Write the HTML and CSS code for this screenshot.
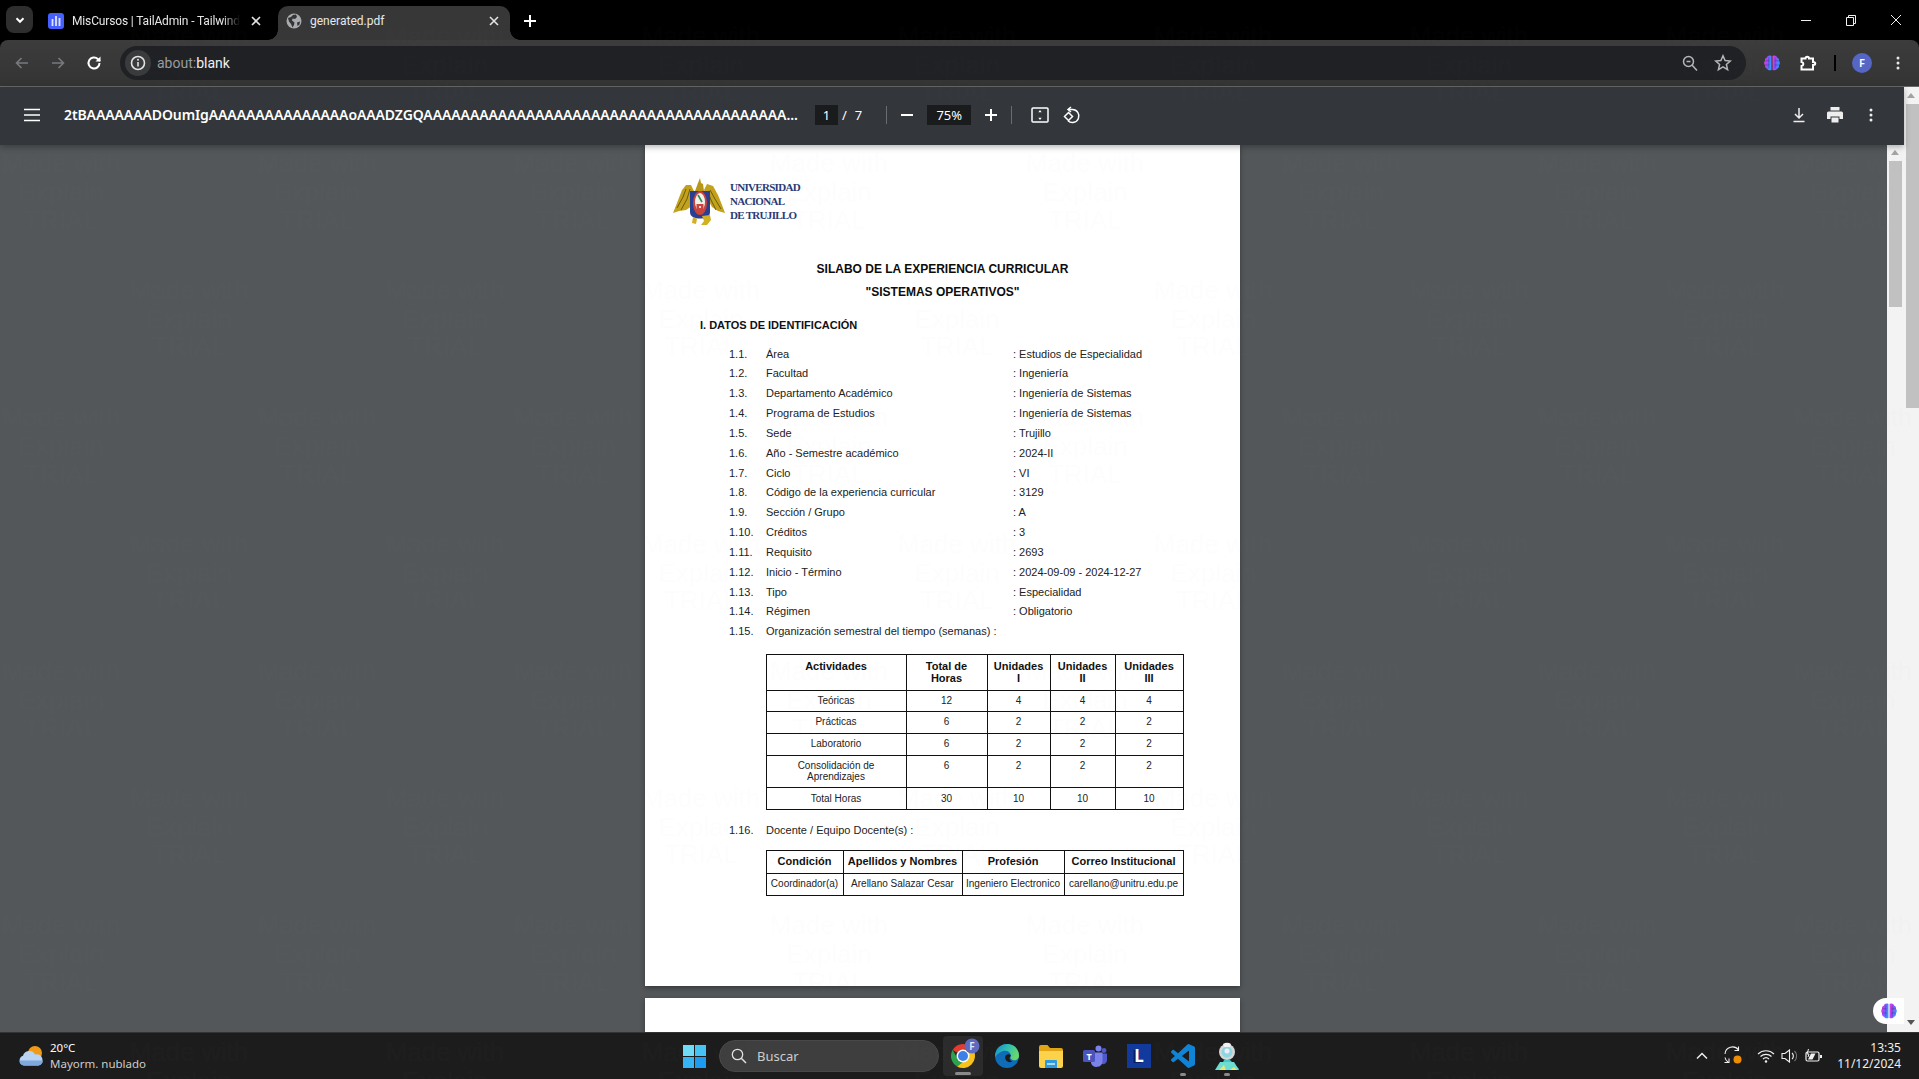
FILE: index.html
```html
<!DOCTYPE html>
<html lang="es">
<head>
<meta charset="utf-8">
<title>generated.pdf</title>
<link rel="stylesheet" href="styles.css">
</head>
<body>
<svg class="defs" width="0" height="0" aria-hidden="true">
  <defs>
    <linearGradient id="brainGrad" x1="0" y1="0" x2="1" y2="0.3">
      <stop offset="0" stop-color="#f04bc0"/><stop offset="0.3" stop-color="#c43df0"/><stop offset="0.6" stop-color="#7a5cff"/><stop offset="1" stop-color="#2f9bff"/>
    </linearGradient>
    <linearGradient id="edgeGrad" x1="0" y1="0" x2="1" y2="0.4">
      <stop offset="0" stop-color="#1788cf"/><stop offset="0.55" stop-color="#2fc0b0"/><stop offset="1" stop-color="#66d86a"/>
    </linearGradient>
    <symbol id="brain" viewBox="0 0 20 20">
      <path d="M9.4 2.2C7 1.2 5 2 4.4 3.8 2.6 4.3 1.8 6 2.3 7.6 1 9 1 11.300 2.300 12.500 1.900 14.300 3 16 4.600 16.300 5.300 18 7.500 18.700 9.400 17.800Z" fill="url(#brainGrad)"/>
      <path d="M10.600 2.200C13 1.200 15 2 15.600 3.800 17.400 4.300 18.200 6 17.700 7.600 19 9 19 11.300 17.700 12.500 18.100 14.300 17 16 15.400 16.300 14.700 18 12.500 18.700 10.600 17.800Z" fill="url(#brainGrad)"/>
      <path d="M2.500 7.500H7M2.500 12.200H7M13 7.500H17.500M13 12.200H17.500M6.500 4V16M13.500 4V16" stroke="#2b1f55" stroke-opacity=".45" stroke-width=".8" fill="none"/>
    </symbol>
    <symbol id="untLogo" viewBox="0 0 52 47">
      <path d="M0 35 4 25 9 12 13 7 18 7 21 13 19 28 13 32 6 33Z" fill="#c2a21c"/>
      <path d="M31 12 34 6 40 8 45 17 49 27 52 35 45 33 39 29 35 22Z" fill="#c2a21c"/>
      <path d="M22 13 25 5 27 0 28 5 30 6 31 13Z" fill="#b8961a"/>
      <path d="M4 30 10 19 13 11M8 32 14 21 17 11M48 31 42 21 37 12M43 32 38 22 35 14" stroke="#6d5a10" stroke-width="1" fill="none"/>
      <path d="M17 13H37V34C37 39 32 40.500 27 40.500 22 40.500 17 39 17 34Z" fill="#2a3f92"/>
      <ellipse cx="27" cy="25" rx="7" ry="12" fill="#c8443c"/>
      <ellipse cx="27" cy="24" rx="5" ry="9" fill="#f2f2ea"/>
      <path d="M23.500 26H30.500V31C30.500 33 28.500 34 27 34 25.500 34 23.500 33 23.500 31Z" fill="#c8443c"/>
      <path d="M25 17 29 24" stroke="#2f8a55" stroke-width="1.600"/>
      <path d="M26 29H28M27 28V30" stroke="#fff" stroke-width="1"/>
      <path d="M29 38 37 37 38 42 34 47 28 47 31 43Z" fill="#d2b024"/>
      <path d="M20 39 24 41 23 46 19 45Z" fill="#d2b024"/>
    </symbol>
    <pattern id="wm" x="0" y="0" width="256" height="254" patternUnits="userSpaceOnUse">
      <g class="wm-text">
        <text x="61" y="172">Made with</text><text x="61" y="201">Explain</text><text x="61" y="229">TRIAL</text>
        <text x="189" y="45">Made with</text><text x="189" y="74">Explain</text><text x="189" y="101">TRIAL</text>
      </g>
    </pattern>
  </defs>
</svg>

<div class="screen">
  <header class="tabstrip">
    <button class="tab-search" aria-label="Buscar pestañas">
      <svg width="12" height="12" viewBox="0 0 12 12"><path d="M2.500 4.300 6 7.800 9.500 4.300" class="st-white2"/></svg>
    </button>
    <div class="tab tab-inactive">
      <svg class="favicon" width="16" height="16" viewBox="0 0 16 16"><rect width="16" height="16" rx="3" fill="#465fff"/><path d="M4.500 6V13M8 3V13M11.500 5V13" stroke="#dfe4ff" stroke-width="1.800"/></svg>
      <span class="tab-title tab-fade">MisCursos | TailAdmin - Tailwind</span>
      <svg class="tab-close" width="12" height="12" viewBox="0 0 12 12"><path d="M2 2 10 10M10 2 2 10" class="st-light"/></svg>
    </div>
    <div class="tab tab-active">
      <svg class="favicon" width="16" height="16" viewBox="0 0 16 16"><circle cx="8" cy="8" r="7.500" fill="#a8abaf"/><path d="M2 5 5 4 7 2 10 1.500 11 4 9 6 6.500 5.500 6 7.500 8.500 9.500 8 12 6.500 14.500 5 11 3 8.500ZM11 9.500 14 8.500 13.500 11.500 11.500 13Z" fill="#353535"/></svg>
      <span class="tab-title">generated.pdf</span>
      <svg class="tab-close" width="12" height="12" viewBox="0 0 12 12"><path d="M2 2 10 10M10 2 2 10" class="st-light"/></svg>
    </div>
    <button class="new-tab" aria-label="Nueva pestaña">
      <svg width="14" height="14" viewBox="0 0 14 14"><path d="M7 1V13M1 7H13" class="st-white2"/></svg>
    </button>
    <div class="window-controls">
      <svg width="45" height="40" viewBox="0 0 45 40"><path d="M18 20.500H28" class="st-thin"/></svg>
      <svg width="45" height="40" viewBox="0 0 45 40"><path d="M18.500 17.500H25.500V25.500H18.500ZM20.500 17.500V15.500H27.500V23.500H25.500" class="st-thin"/></svg>
      <svg width="45" height="40" viewBox="0 0 45 40"><path d="M18 15 28 25M28 15 18 25" class="st-thin"/></svg>
    </div>
  </header>

  <nav class="toolbar">
    <span class="tb-btn"><svg width="16" height="16" viewBox="0 0 16 16"><path d="M14 8H2.500M7.500 3 2.500 8 7.500 13" class="st-dim"/></svg></span>
    <span class="tb-btn"><svg width="16" height="16" viewBox="0 0 16 16"><path d="M2 8H13.500M8.500 3 13.500 8 8.500 13" class="st-dim"/></svg></span>
    <span class="tb-btn"><svg width="16" height="16" viewBox="0 0 16 16"><path d="M13.500 8A5.500 5.500 0 1 1 11.800 4L14 6" class="st-white2"/><path d="M14.500 1.500V6.500H9.500Z" fill="#fff"/></svg></span>
    <div class="omnibox">
      <span class="info-chip"><svg width="16" height="16" viewBox="0 0 16 16"><circle cx="8" cy="8" r="6.500" class="st-light"/><path d="M8 7V11.500" class="st-light"/><circle cx="8" cy="4.800" r="1" fill="#e3e3e3"/></svg></span>
      <span class="url"><span class="url-scheme">about:</span>blank</span>
      <span class="omni-right">
        <svg width="18" height="18" viewBox="0 0 18 18"><circle cx="7.500" cy="7.500" r="5" class="st-mid"/><path d="M11 11 16 16.500M5.500 7.500H9.500" class="st-mid"/></svg>
        <svg width="18" height="18" viewBox="0 0 18 18"><path d="M9 1.800 11.100 6.600 16.300 7.100 12.400 10.500 13.600 15.600 9 12.900 4.400 15.600 5.600 10.500 1.700 7.100 6.900 6.600Z" class="st-mid"/></svg>
      </span>
    </div>
    <span class="tb-btn"><svg width="18" height="18"><use href="#brain"/></svg></span>
    <span class="tb-btn"><svg width="18" height="18" viewBox="0 0 18 18"><path d="M2.500 4.500H6.500C6.500 2 10 2 10 4.500H14V8C17 8 17 11 14 11V15.500H2.500V12C5 11.500 5 8.500 2.500 8Z" class="st-white2"/></svg></span>
    <span class="tb-sep"></span>
    <span class="tb-btn"><span class="avatar">F</span></span>
    <span class="tb-btn"><svg width="16" height="16" viewBox="0 0 16 16"><circle cx="8" cy="3" r="1.500" fill="#e8e8e8"/><circle cx="8" cy="8" r="1.500" fill="#e8e8e8"/><circle cx="8" cy="13" r="1.500" fill="#e8e8e8"/></svg></span>
  </nav>

  <div class="content">
    <main class="viewer">
      <div class="pdf-toolbar">
        <span class="pb-btn"><svg width="16" height="14" viewBox="0 0 16 14"><path d="M0 1.500H16M0 7H16M0 12.500H16" stroke="#fff" stroke-width="1.700" fill="none"/></svg></span>
        <span class="pdf-title">2tBAAAAAAADOumIgAAAAAAAAAAAAAAAoAAADZGQAAAAAAAAAAAAAAAAAAAAAAAAAAAAAAAAAAAAAAA...</span>
        <span class="page-box">1</span>
        <span class="page-slash">/</span>
        <span class="page-total">7</span>
        <span class="pb-sep pb-sep-a"></span>
        <span class="pb-btn pb-minus"><svg width="14" height="14" viewBox="0 0 14 14"><path d="M1 7H13" class="st-white2"/></svg></span>
        <span class="zoom-box">75%</span>
        <span class="pb-btn pb-plus"><svg width="14" height="14" viewBox="0 0 14 14"><path d="M1 7H13M7 1V13" class="st-white2"/></svg></span>
        <span class="pb-sep pb-sep-b"></span>
        <span class="pb-btn pb-fit"><svg width="18" height="16" viewBox="0 0 18 16"><rect x="1" y="1" width="16" height="14" rx="1" class="st-white15"/><path d="M9 3 7.300 5.200H10.700ZM9 13 7.300 10.800H10.700Z" fill="#fff"/></svg></span>
        <span class="pb-btn pb-rot"><svg width="18" height="18" viewBox="0 0 18 18"><path d="M5.500 3.500H9.500A6.500 6.500 0 1 1 5 14.800" class="st-white15"/><path d="M8 1 5 3.500 8 6" class="st-white15"/><path d="M5.500 6.500 9.500 10.500 5.500 14.500 1.500 10.500Z" class="st-white15"/></svg></span>
        <span class="pb-right">
          <span class="pb-btn"><svg width="16" height="16" viewBox="0 0 16 16"><path d="M8 1V10.500M4 7 8 11 12 7M2.500 14.500H13.500" class="st-light15"/></svg></span>
          <span class="pb-btn"><svg width="18" height="18" viewBox="0 0 18 18"><path d="M4.500 1H13.500V4.500H4.500Z" fill="#eee"/><path d="M2.500 5.500H15.500A1.500 1.500 0 0 1 17 7V13H13.500V10.500H4.500V13H1V7A1.500 1.500 0 0 1 2.500 5.500Z" fill="#eee"/><path d="M5.500 11.500H12.500V16.500H5.500Z" fill="#eee"/></svg></span>
          <span class="pb-btn"><svg width="16" height="16" viewBox="0 0 16 16"><circle cx="8" cy="3" r="1.500" fill="#eee"/><circle cx="8" cy="8" r="1.500" fill="#eee"/><circle cx="8" cy="13" r="1.500" fill="#eee"/></svg></span>
        </span>
      </div>
      <div class="pdf-area">
        <div class="pages">
          <article class="page">
            <div class="letterhead">
              <svg class="logo" width="52" height="47"><use href="#untLogo"/></svg>
              <div class="uni-name">UNIVERSIDAD<br>NACIONAL<br>DE TRUJILLO</div>
            </div>
            <h1 class="doc-title">SILABO DE LA EXPERIENCIA CURRICULAR<br>"SISTEMAS OPERATIVOS"</h1>
            <h2 class="doc-section">I. DATOS DE IDENTIFICACIÓN</h2>
            <div class="data-list">
              <div class="data-row"><span>1.1.</span><span>Área</span><span>: Estudios de Especialidad</span></div>
              <div class="data-row"><span>1.2.</span><span>Facultad</span><span>: Ingeniería</span></div>
              <div class="data-row"><span>1.3.</span><span>Departamento Académico</span><span>: Ingeniería de Sistemas</span></div>
              <div class="data-row"><span>1.4.</span><span>Programa de Estudios</span><span>: Ingeniería de Sistemas</span></div>
              <div class="data-row"><span>1.5.</span><span>Sede</span><span>: Trujillo</span></div>
              <div class="data-row"><span>1.6.</span><span>Año - Semestre académico</span><span>: 2024-II</span></div>
              <div class="data-row"><span>1.7.</span><span>Ciclo</span><span>: VI</span></div>
              <div class="data-row"><span>1.8.</span><span>Código de la experiencia curricular</span><span>: 3129</span></div>
              <div class="data-row"><span>1.9.</span><span>Sección / Grupo</span><span>: A</span></div>
              <div class="data-row"><span>1.10.</span><span>Créditos</span><span>: 3</span></div>
              <div class="data-row"><span>1.11.</span><span>Requisito</span><span>: 2693</span></div>
              <div class="data-row"><span>1.12.</span><span>Inicio - Término</span><span>: 2024-09-09 - 2024-12-27</span></div>
              <div class="data-row"><span>1.13.</span><span>Tipo</span><span>: Especialidad</span></div>
              <div class="data-row"><span>1.14.</span><span>Régimen</span><span>: Obligatorio</span></div>
              <div class="data-row"><span>1.15.</span><span class="span-2">Organización semestral del tiempo (semanas) :</span></div>
            </div>
            <table class="doc-table hours">
              <colgroup><col class="h1"><col class="h2"><col class="h3"><col class="h4"><col class="h5"></colgroup>
              <tr class="r-head"><th>Actividades</th><th>Total de<br>Horas</th><th>Unidades<br>I</th><th>Unidades<br>II</th><th>Unidades<br>III</th></tr>
              <tr class="r-a"><td>Teóricas</td><td>12</td><td>4</td><td>4</td><td>4</td></tr>
              <tr class="r-b"><td>Prácticas</td><td>6</td><td>2</td><td>2</td><td>2</td></tr>
              <tr class="r-c"><td>Laboratorio</td><td>6</td><td>2</td><td>2</td><td>2</td></tr>
              <tr class="r-d"><td class="tight">Consolidación de<br>Aprendizajes</td><td>6</td><td>2</td><td>2</td><td>2</td></tr>
              <tr class="r-b r-total"><td>Total Horas</td><td>30</td><td>10</td><td>10</td><td>10</td></tr>
            </table>
            <div class="data-row row-teachers"><span>1.16.</span><span class="span-2">Docente / Equipo Docente(s) :</span></div>
            <table class="doc-table staff">
              <colgroup><col class="s1"><col class="s2"><col class="s3"><col class="s4"></colgroup>
              <tr class="r-shead"><th>Condición</th><th>Apellidos y Nombres</th><th>Profesión</th><th>Correo Institucional</th></tr>
              <tr class="r-sbody"><td>Coordinador(a)</td><td>Arellano Salazar Cesar</td><td>Ingeniero Electronico</td><td>carellano@unitru.edu.pe</td></tr>
            </table>
          </article>
          <article class="page">
            <div class="letterhead"><svg class="logo" width="52" height="47"><use href="#untLogo"/></svg></div>
          </article>
        </div>
        <div class="inner-scroll">
          <span class="arrow-up"></span>
          <span class="thumb-inner"></span>
        </div>
      </div>
    </main>
    <aside class="outer-scroll">
      <span class="arrow-up"></span>
      <span class="thumb-outer"></span>
      <span class="arrow-down"></span>
    </aside>
    <div class="float-pill"><svg width="18" height="18"><use href="#brain"/></svg></div>
  </div>

  <footer class="taskbar">
    <div class="tb-left">
      <svg width="26" height="22" viewBox="0 0 26 22">
        <circle cx="17" cy="8" r="7" fill="#f09a1a"/>
        <path d="M6 20.500A5 5 0 0 1 5 10.800 6.500 6.500 0 0 1 17 9.500 5.500 5.500 0 0 1 20.500 20.500Z" fill="#b9d3f2"/>
        <path d="M6 20.500A5 5 0 0 1 1.500 15.500H25A5.500 5.500 0 0 1 20.500 20.500Z" fill="#7fa9de"/>
      </svg>
      <div class="weather"><div class="w-temp">20°C</div><div class="w-desc">Mayorm. nublado</div></div>
    </div>
    <div class="tb-center">
      <svg class="win" width="23" height="23" viewBox="0 0 23 23">
        <rect width="11" height="11" fill="#6fdcf7"/><rect x="12" width="11" height="11" fill="#45c4f5"/><rect y="12" width="11" height="11" fill="#35b5f5"/><rect x="12" y="12" width="11" height="11" fill="#1c9bf0"/>
      </svg>
      <div class="search-pill">
        <svg width="16" height="16" viewBox="0 0 16 16"><circle cx="6.500" cy="6.500" r="5.200" fill="none" stroke="#e0e0e0" stroke-width="1.300"/><path d="M10.300 10.300 15 15" stroke="#e0e0e0" stroke-width="1.500"/></svg>
        <span>Buscar</span>
      </div>
      <div class="app app-active">
        <svg width="40" height="40" viewBox="0 0 40 40">
          <path d="M20 8A12 12 0 0 1 30.400 14H20A6 6 0 0 0 14.800 17L9.600 14A12 12 0 0 1 20 8Z" fill="#e33b2e"/>
          <path d="M9.600 14 14.800 23A6 6 0 0 0 20 26L14 30.400A12 12 0 0 1 9.600 14Z" fill="#2ba24c"/>
          <path d="M30.400 14A12 12 0 0 1 14 30.400L20 26A6 6 0 0 0 25.200 17L20 14Z" fill="#f7c21a"/>
          <circle cx="20" cy="20" r="6.500" fill="#fff"/><circle cx="20" cy="20" r="5" fill="#3f7fe8"/>
          <circle cx="29" cy="10" r="7.500" fill="#5c6bc0"/>
          <text x="29" y="13.500" class="badge-f">F</text>
        </svg>
        <span class="app-bar"></span>
      </div>
      <div class="app">
        <svg width="24" height="24" viewBox="0 0 24 24">
          <circle cx="12" cy="12" r="12" fill="#0f6cb8"/>
          <path d="M1 7.500C3 2.800 7 0 12 0 19 0 24 5 24 12 24 15 21 17 18 16 15 15 15 13 16 11 15 7 11 6 8 7 5 8 2 10 0 13 0 11 .3 9 1 7.500Z" fill="url(#edgeGrad)"/>
          <path d="M10 13C11 9.500 15 9.500 16 12 14 13 14 16 17 17.500 14 19.500 10 17 10 13Z" fill="#1c1c1c"/>
        </svg>
      </div>
      <div class="app">
        <svg width="24" height="23" viewBox="0 0 24 23">
          <path d="M0 2A2 2 0 0 1 2 0H8.500L11 3H22A2 2 0 0 1 24 5V8H0Z" fill="#e0a416"/>
          <path d="M0 6H24V21A2 2 0 0 1 22 23H2A2 2 0 0 1 0 21Z" fill="#fbd24a"/>
          <path d="M7 15H17A1 1 0 0 1 18 16V23H6V16A1 1 0 0 1 7 15Z" fill="#2d9ae0"/>
          <path d="M8 19H16" stroke="#d5ecfa" stroke-width="1.500"/>
        </svg>
      </div>
      <div class="app">
        <svg width="24" height="24" viewBox="0 0 24 24">
          <circle cx="15.500" cy="4.500" r="3" fill="#7b83eb"/><circle cx="21" cy="6.500" r="2.400" fill="#5059c9"/>
          <path d="M18 9.500H24V16A4 4 0 0 1 19 20Z" fill="#5059c9"/>
          <path d="M9 8.500H19.500V18A6 6 0 0 1 8 19Z" fill="#7b83eb"/>
          <rect x="0" y="6" width="12" height="12" rx="1.500" fill="#4b53bc"/>
          <text x="6" y="15.500" class="teams-t">T</text>
        </svg>
      </div>
      <div class="app">
        <span class="l-tile">L</span>
      </div>
      <div class="app">
        <svg width="24" height="24" viewBox="0 0 24 24">
          <path d="M23.150 2.587 18.210.210a1.494 1.494 0 0 0-1.705.29l-9.460 8.630-4.120-3.128a.999.999 0 0 0-1.276.057L.327 7.261A1 1 0 0 0 .326 8.740L3.899 12 .326 15.260a1 1 0 0 0 .001 1.479L1.650 17.940a.999.999 0 0 0 1.276.057l4.120-3.128 9.460 8.630a1.492 1.492 0 0 0 1.704.29l4.942-2.377A1.500 1.500 0 0 0 24 20.060V3.939a1.500 1.500 0 0 0-.850-1.352zm-5.146 14.861L10.826 12l7.178-5.448v10.896z" fill="#0f84d6"/>
        </svg>
        <span class="app-dot"></span>
      </div>
      <div class="app">
        <svg width="24" height="30" viewBox="0 0 24 30">
          <path d="M5 28 9 19H15L24 28Z" fill="#42c7c9"/><path d="M0 29 5 21H19L24 29Z" fill="#6ddcd2"/>
          <circle cx="12" cy="11" r="8" fill="#d7d7d7"/><circle cx="12" cy="11" r="5.500" fill="#8fd7e0"/><circle cx="12" cy="10" r="2.500" fill="#eef"/>
          <path d="M8 3A8 8 0 0 1 16 3L15 6H9Z" fill="#f2f2f2"/><path d="M4 29 9 24 11 29ZM15 29H22L19 26Z" fill="#e8e86a"/>
        </svg>
        <span class="app-dot"></span>
      </div>
    </div>
    <div class="tray">
      <svg class="t-chev" width="14" height="10" viewBox="0 0 14 10"><path d="M2 7.500 7 2.500 12 7.500" class="st-light15"/></svg>
      <svg class="t-sync" width="22" height="20" viewBox="0 0 22 20"><path d="M2 8A7.500 7.500 0 0 1 15.500 4M15.500 0.500V4.500H11.500M2 11.500A7 7 0 0 0 5 16M1.500 16.500H6V12.500" fill="none" stroke="#f0f0f0" stroke-width="1.100"/><circle cx="14.500" cy="13.500" r="4" fill="#f08c00"/></svg>
      <svg class="t-wifi" width="18" height="14" viewBox="0 0 18 14"><path d="M1 5A11.500 11.500 0 0 1 17 5M3.500 7.500A8 8 0 0 1 14.500 7.500M6 10A4.500 4.500 0 0 1 12 10" fill="none" stroke="#f0f0f0" stroke-width="1.200"/><circle cx="9" cy="12.500" r="1.200" fill="#f0f0f0"/></svg>
      <svg class="t-vol" width="18" height="14" viewBox="0 0 18 14"><path d="M1 4.500H4L8.500 1V13L4 9.500H1Z" fill="none" stroke="#f0f0f0" stroke-width="1.100"/><path d="M11 4A4 4 0 0 1 11 10" fill="none" stroke="#f0f0f0" stroke-width="1.100"/><path d="M13.500 2A7 7 0 0 1 13.500 12" fill="none" stroke="#777" stroke-width="1.100"/></svg>
      <svg class="t-bat" width="18" height="14" viewBox="0 0 18 14"><rect x="1" y="3" width="13" height="9" rx="1.500" fill="none" stroke="#f0f0f0" stroke-width="1.200"/><path d="M3 10.500 6 4.500H10.500L7.500 10.500Z" fill="#f0f0f0"/><path d="M3.500 0 2 5H4L3 8" fill="none" stroke="#f0f0f0"/><rect x="15" y="6" width="2" height="3" fill="#f0f0f0"/></svg>
      <div class="clock"><div>13:35</div><div>11/12/2024</div></div>
    </div>
  </footer>

  <svg class="watermark" width="1919" height="1079" aria-hidden="true"><rect width="1919" height="1079" fill="url(#wm)"/></svg>
</div>
</body>
</html>
```
FILE: styles.css
```css
* { box-sizing: border-box; }
html, body { margin: 0; height: 100%; overflow: hidden; background: #000; }
body { font-family: "Noto Sans", "Liberation Sans", sans-serif; color: #fff; }
button { border: 0; padding: 0; background: none; font: inherit; color: inherit; }
.defs { position: absolute; }

.st-white2 { fill: none; stroke: #fff; stroke-width: 2; }
.st-white15 { fill: none; stroke: #fff; stroke-width: 1.5; }
.st-light { fill: none; stroke: #e3e3e3; stroke-width: 1.6; }
.st-light15 { fill: none; stroke: #eee; stroke-width: 1.5; }
.st-dim { fill: none; stroke: #777a7d; stroke-width: 1.6; }
.st-mid { fill: none; stroke: #b4b6b8; stroke-width: 1.5; }
.st-thin { fill: none; stroke: #f0f0f0; stroke-width: 1; }

.screen { position: relative; width: 1919px; height: 1079px; display: flex; flex-direction: column; overflow: hidden; }

/* Tab strip */
.tabstrip { flex: 0 0 40px; display: flex; align-items: flex-start; background: #000; padding-left: 6px; }
.tab-search { width: 27px; height: 27px; margin-top: 6px; border-radius: 8px; background: #2e2e2e; display: flex; align-items: center; justify-content: center; }
.tab { height: 34px; margin-top: 6px; padding-bottom: 5px; display: flex; align-items: center; font-family: Roboto, "Noto Sans", sans-serif; font-size: 12px; position: relative; }
.tab-inactive { width: 232px; margin-left: 6px; padding-left: 9px; color: #e6e6e6; }
.tab-active { width: 232px; margin-left: 7px; padding-left: 8px; background: #373737; border-radius: 10px 10px 0 0; color: #e8e8e8; }
.tab-active::before, .tab-active::after { content: ""; position: absolute; bottom: 0; width: 10px; height: 10px; }
.tab-active::before { left: -10px; background: radial-gradient(circle at 0 0, transparent 9.5px, #373737 10px); }
.tab-active::after { right: -10px; background: radial-gradient(circle at 100% 0, transparent 9.5px, #373737 10px); }
.favicon { flex: none; }
.tab-title { margin-left: 8px; white-space: nowrap; flex: none; }
.tab-fade { letter-spacing: -.15px; mask-image: linear-gradient(to right, #000 90%, transparent 100%); }
.tab-close { flex: none; margin: 0 10px 0 auto; }
.tab-inactive .tab-close { margin-right: 9px; }
.new-tab { width: 40px; height: 29px; margin-top: 6px; display: flex; align-items: center; justify-content: center; }
.window-controls { margin-left: auto; margin-right: 1px; display: flex; }
.window-controls svg { display: block; }

/* Browser toolbar */
.toolbar { flex: 0 0 47px; display: flex; align-items: center; padding: 0 3px 1px 4px; background: linear-gradient(#3c3c3c, #343434); border-bottom: 1px solid #6a6a6a; border-radius: 8px 8px 0 0; }
.tb-btn { flex: none; width: 36px; height: 36px; display: flex; align-items: center; justify-content: center; }
.omnibox { flex: 1; height: 34px; margin: 0 8px; background: #202124; border-radius: 17px; display: flex; align-items: center; padding: 0 14px 0 5px; }
.info-chip { width: 26px; height: 26px; border-radius: 50%; background: #3a3b3d; display: flex; align-items: center; justify-content: center; }
.url { margin-left: 6px; font-family: Roboto, "Noto Sans", sans-serif; font-size: 14px; color: #f0f0f0; }
.url-scheme { color: #9a9c9f; }
.omni-right { margin-left: auto; display: flex; gap: 15px; align-items: center; }
.tb-sep { flex: none; width: 2px; height: 16px; margin: 0 8px; background: #000; }
.avatar { width: 20px; height: 20px; border-radius: 50%; background: #5566c4; font-size: 11px; font-weight: 600; display: flex; align-items: center; justify-content: center; }

/* Layout of the viewer */
.content { flex: 1; min-height: 0; display: flex; position: relative; }
.viewer { flex: 1; min-width: 0; display: flex; flex-direction: column; }
.pdf-toolbar { flex: 0 0 58px; display: flex; align-items: center; padding: 0 0 3px 14px; background: #33363a; box-shadow: 0 2px 6px rgba(0,0,0,.3); position: relative; z-index: 2; }
.pb-btn { flex: none; width: 36px; height: 36px; display: flex; align-items: center; justify-content: center; }
.pdf-title { flex: none; width: 730px; margin-left: 14px; font-size: 14px; font-weight: 600; color: #fff; white-space: nowrap; letter-spacing: -.1px; }
.page-box, .zoom-box { flex: none; height: 20px; background: #191b1d; font-size: 13px; display: flex; align-items: center; justify-content: center; }
.page-box { width: 23px; margin-left: 21px; }
.page-slash { margin-left: 4px; font-size: 13px; }
.page-total { margin-left: 8px; font-size: 13px; }
.pb-sep { flex: none; width: 1px; height: 18px; background: #6a6d70; }
.pb-sep-a { margin-left: 24px; }
.pb-minus { margin-left: 2px; }
.zoom-box { width: 44px; margin-left: 2px; }
.pb-plus { margin-left: 2px; }
.pb-sep-b { margin-left: 2px; }
.pb-fit { margin-left: 10px; }
.pb-rot { margin-left: -4px; }
.pb-right { margin-left: auto; margin-right: 15px; display: flex; }

.pdf-area { flex: 1; min-height: 0; display: flex; background: #53575a; }
.pages { flex: 1; min-width: 0; overflow: hidden; display: flex; flex-direction: column; align-items: center; gap: 12px; padding-right: 2px; margin-top: -1px; }
.page { flex: none; width: 595px; height: 842px; background: #fff; color: #111; font-family: "Liberation Sans", Arial, sans-serif; padding-top: 34px; box-shadow: 0 2px 5px rgba(0,0,0,.35); }

.inner-scroll { flex: 0 0 17px; position: relative; background: #f3f3f3; }
.inner-scroll .arrow-up { top: 5px; left: 4px; }
.thumb-inner { position: absolute; left: 2px; top: 16px; width: 13px; height: 146px; background: #c1c1c1; }
.outer-scroll { flex: 0 0 15px; position: relative; background: #f3f3f3; }
.outer-scroll .arrow-up { top: 6px; left: 3px; }
.thumb-outer { position: absolute; left: 2px; right: 0; top: 17px; height: 304px; background: #c1c1c1; }
.arrow-up, .arrow-down { position: absolute; width: 0; height: 0; border-left: 4px solid transparent; border-right: 4px solid transparent; }
.arrow-up { border-bottom: 5px solid #a3a3a3; }
.arrow-down { border-top: 5px solid #555; bottom: 7px; left: 3px; }
.float-pill { position: absolute; left: 1873px; top: 911px; width: 31px; height: 26px; border-radius: 13px 0 0 13px; background: #fff; display: flex; align-items: center; justify-content: center; }

/* Document */
.letterhead { display: flex; padding-left: 28px; height: 47px; }
.logo { flex: none; display: block; }
.uni-name { margin: 2px 0 0 5px; font-family: "Liberation Serif", serif; font-weight: 700; font-size: 11px; letter-spacing: -.7px; line-height: 14px; color: #2b3a75; white-space: nowrap; }
.doc-title { margin: 33px 0 0; font-size: 12px; font-weight: 700; line-height: 22.5px; text-align: center; color: #0c0c0c; }
.doc-section { margin: 15px 0 0 55px; font-size: 11px; font-weight: 700; line-height: 14px; color: #111; }
.data-list { margin-top: 11.5px; padding-left: 84px; }
.data-row { display: grid; grid-template-columns: 37px 247px 1fr; height: 19.85px; line-height: 20px; font-size: 11px; color: #222; }
.span-2 { grid-column: span 2; }
.row-teachers { margin: 10px 0 0 84px; }
.doc-table { border-collapse: collapse; table-layout: fixed; width: 417px; margin-left: 120.5px; color: #222; }
.hours { margin-top: 12.5px; }
.staff { margin-top: 10px; }
.doc-table th, .doc-table td { border: 1px solid #111; padding: 4px 1px 0; vertical-align: top; text-align: center; font-size: 10px; line-height: 12px; }
.doc-table th { font-size: 11px; font-weight: 700; color: #111; padding-top: 5px; }
.doc-table td.tight { line-height: 11px; }
.h1 { width: 140px; } .h2 { width: 81px; } .h3 { width: 63px; } .h4 { width: 65px; } .h5 { width: 68px; }
.s1 { width: 77px; } .s2 { width: 119px; } .s3 { width: 102px; } .s4 { width: 119px; }
.r-head { height: 36px; } .r-a { height: 21px; } .r-b { height: 22px; } .r-c { height: 22px; } .r-d { height: 32px; }
.r-shead { height: 23px; } .r-sbody { height: 22px; }
.doc-table .r-total td { padding-top: 5px; }
.doc-table .r-shead th { padding-top: 4px; }
.doc-table .r-sbody td { padding: 4px 0 0; }

/* Taskbar */
.taskbar { flex: 0 0 47px; display: flex; background: #1c1c1c; border-top: 1px solid #333; position: relative; z-index: 3; }
.tb-left { flex: 0 0 683px; display: flex; align-items: center; padding-left: 18px; gap: 6px; }
.weather { font-size: 11.5px; line-height: 16px; }
.w-temp { color: #fff; }
.w-desc { color: #ccc; }
.tb-center { display: flex; align-items: center; }
.win { flex: none; }
.search-pill { width: 220px; height: 32px; margin-left: 13px; border-radius: 16px; background: #3e3e3e; border: 1px solid #484848; display: flex; align-items: center; padding-left: 11px; gap: 10px; font-size: 13px; color: #ccc; }
.app { flex: none; width: 44px; height: 40px; position: relative; display: flex; align-items: center; justify-content: center; }
.app-active { width: 40px; margin: 0 2px 0 4px; background: #2b2b2b; border-radius: 4px; }
.app-bar { position: absolute; bottom: 1px; left: 12px; width: 16px; height: 3px; border-radius: 2px; background: #8a8a8a; }
.app-dot { position: absolute; bottom: 0; left: 19px; width: 6px; height: 3px; border-radius: 2px; background: #8a8a8a; }
.badge-f { fill: #e8eaff; font: 600 10px "Noto Sans", sans-serif; text-anchor: middle; }
.teams-t { fill: #fff; font: 700 9px "Noto Sans", sans-serif; text-anchor: middle; }
.l-tile { width: 24px; height: 24px; background: #123a9c; color: #fff; font: 700 17px/24px "Noto Sans", sans-serif; text-align: center; text-shadow: -2px 1px 0 #0a1f5c; }
.tray { flex: 1; display: flex; align-items: center; position: relative; }
.t-chev { margin-left: 446px; }
.t-sync { margin-left: 14px; }
.t-wifi { margin-left: 12px; }
.t-vol { margin-left: 6px; }
.t-bat { margin-left: 6px; }
.clock { margin-left: auto; margin-right: 18px; text-align: right; font-size: 12px; line-height: 16px; color: #f0f0f0; }

/* Faint watermark that lies over the whole screen */
.watermark { position: absolute; left: 0; top: 0; pointer-events: none; z-index: 5; }
.wm-text text { fill: rgba(128,128,128,.014); font: 26px "Liberation Sans", sans-serif; text-anchor: middle; }
```
